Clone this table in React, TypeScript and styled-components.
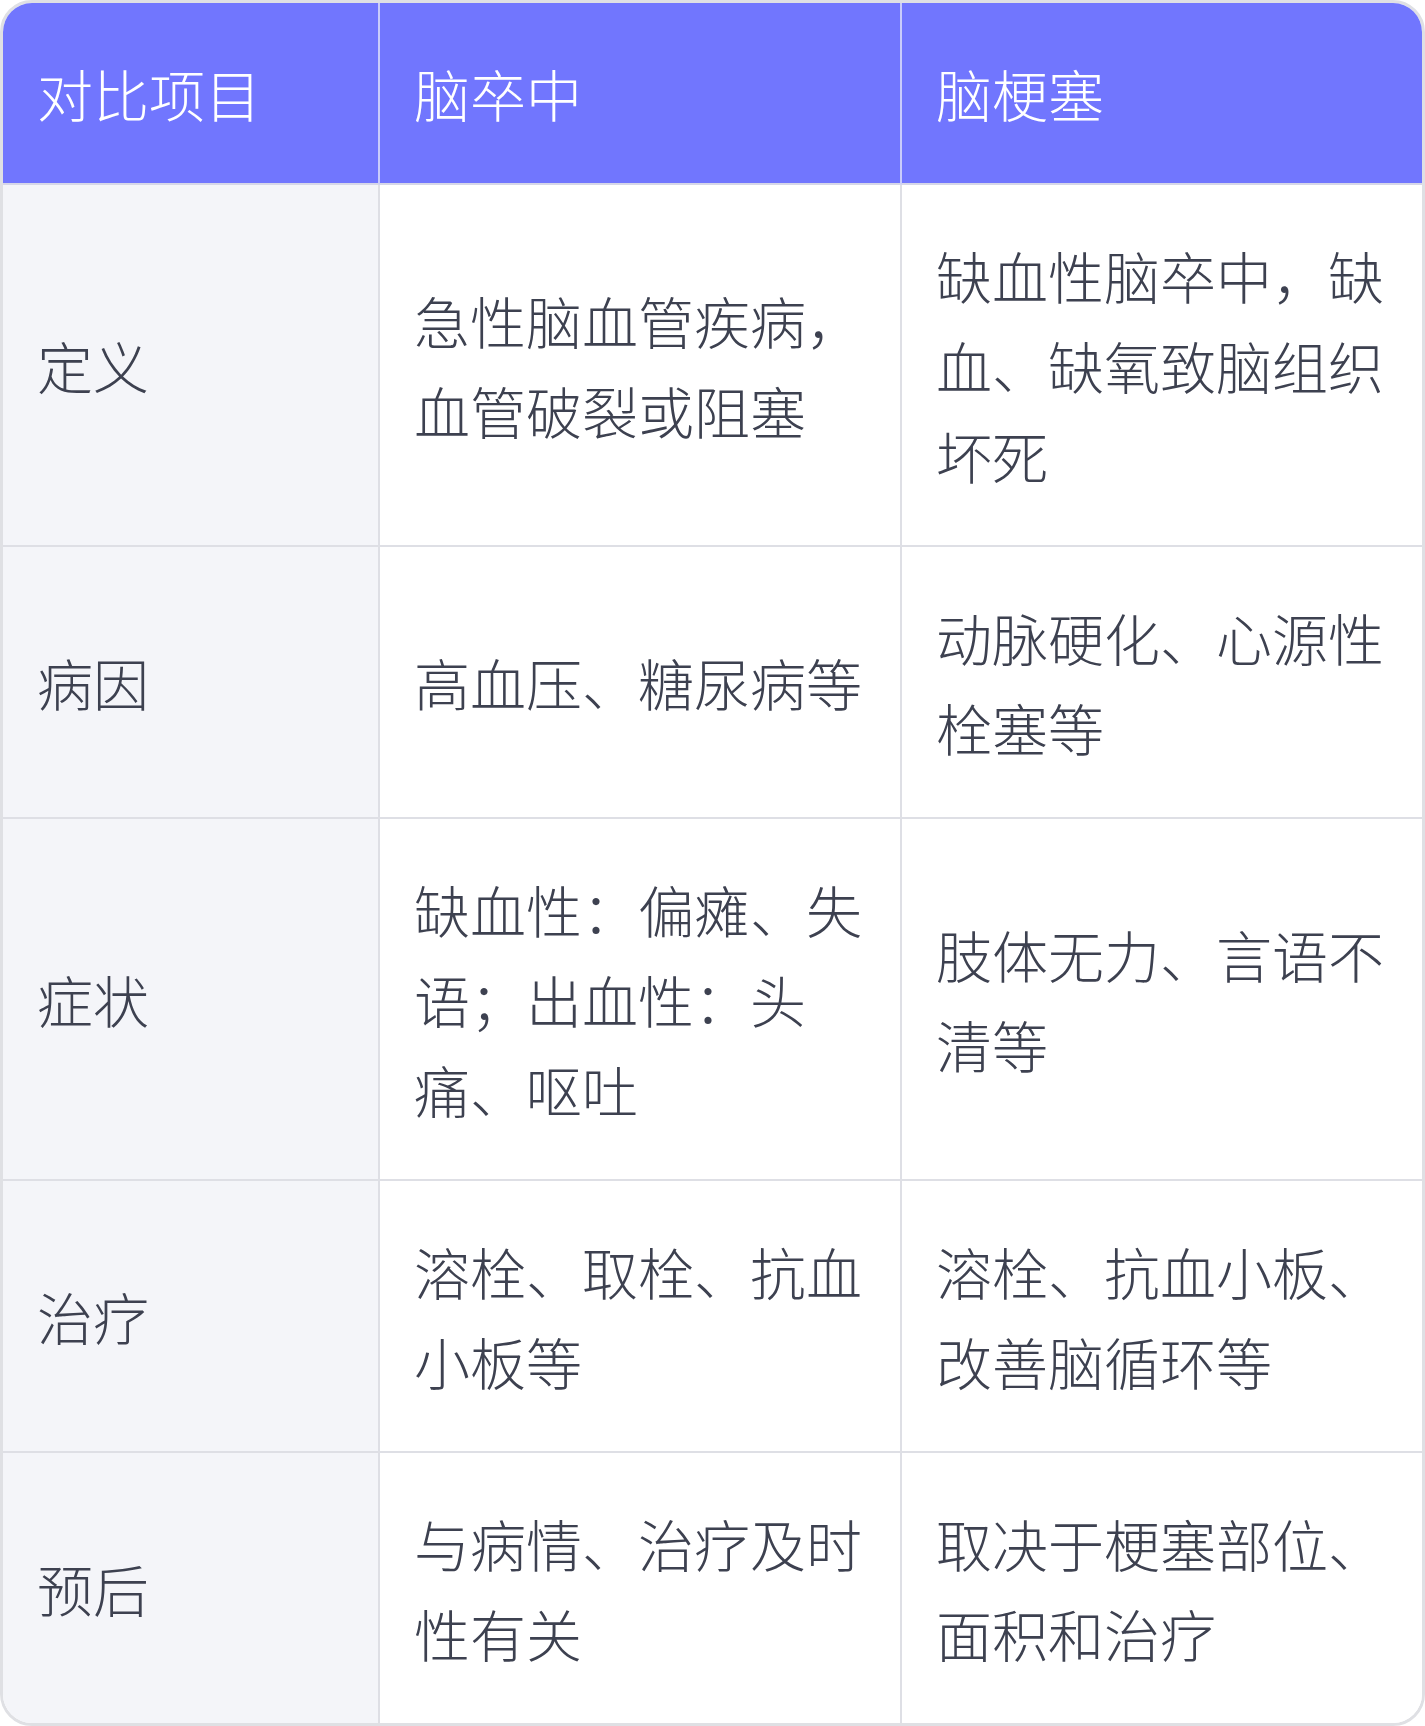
import React from "react";
import styled, { createGlobalStyle } from "styled-components";

const Global = createGlobalStyle`
  html, body {
    margin: 0;
    padding: 0;
    background: #ffffff;
  }
  * { box-sizing: border-box; }
`;

const Table = styled.div`
  width: 1425px;
  display: grid;
  grid-template-columns: 377px 522px 1fr;
  border: 3px solid #dfe0e4;
  border-radius: 32px;
  overflow: hidden;
  font-family: "Noto Sans CJK SC", "Noto Sans", sans-serif;
  font-size: 56px;
  font-weight: 300;
  line-height: 90px;
  color: #3d4150;
  background: #ffffff;
`;

const Cell = styled.div<{ $last?: boolean; $bottom?: boolean; $label?: boolean }>`
  display: flex;
  align-items: center;
  padding: 45px 34px;
  border-right: ${(p) => (p.$last ? "none" : "2px solid #dedfe5")};
  border-bottom: ${(p) => (p.$bottom ? "none" : "2px solid #dedfe5")};
  background: ${(p) => (p.$label ? "#f4f5f9" : "#ffffff")};
`;

const HeadCell = styled.div<{ $last?: boolean }>`
  display: flex;
  align-items: center;
  padding: 45px 34px;
  background: #7176fe;
  color: #ffffff;
  border-right: ${(p) => (p.$last ? "none" : "2px solid #c9cbfb")};
  border-bottom: 2px solid #d6d7e8;
`;

const headers = ["对比项目", "脑卒中", "脑梗塞"];

const rows: [string, string, string][] = [
  ["定义", "急性脑血管疾病，血管破裂或阻塞", "缺血性脑卒中，缺血、缺氧致脑组织坏死"],
  ["病因", "高血压、糖尿病等", "动脉硬化、心源性栓塞等"],
  ["症状", "缺血性：偏瘫、失语；出血性：头痛、呕吐", "肢体无力、言语不清等"],
  ["治疗", "溶栓、取栓、抗血小板等", "溶栓、抗血小板、改善脑循环等"],
  ["预后", "与病情、治疗及时性有关", "取决于梗塞部位、面积和治疗"],
];

export default function App() {
  return (
    <>
      <Global />
      <Table>
        {headers.map((h, i) => (
          <HeadCell key={h} $last={i === headers.length - 1}>
            {h}
          </HeadCell>
        ))}
        {rows.map((r, ri) =>
          r.map((c, ci) => (
            <Cell
              key={`${ri}-${ci}`}
              $label={ci === 0}
              $last={ci === 2}
              $bottom={ri === rows.length - 1}
            >
              {c}
            </Cell>
          ))
        )}
      </Table>
    </>
  );
}
